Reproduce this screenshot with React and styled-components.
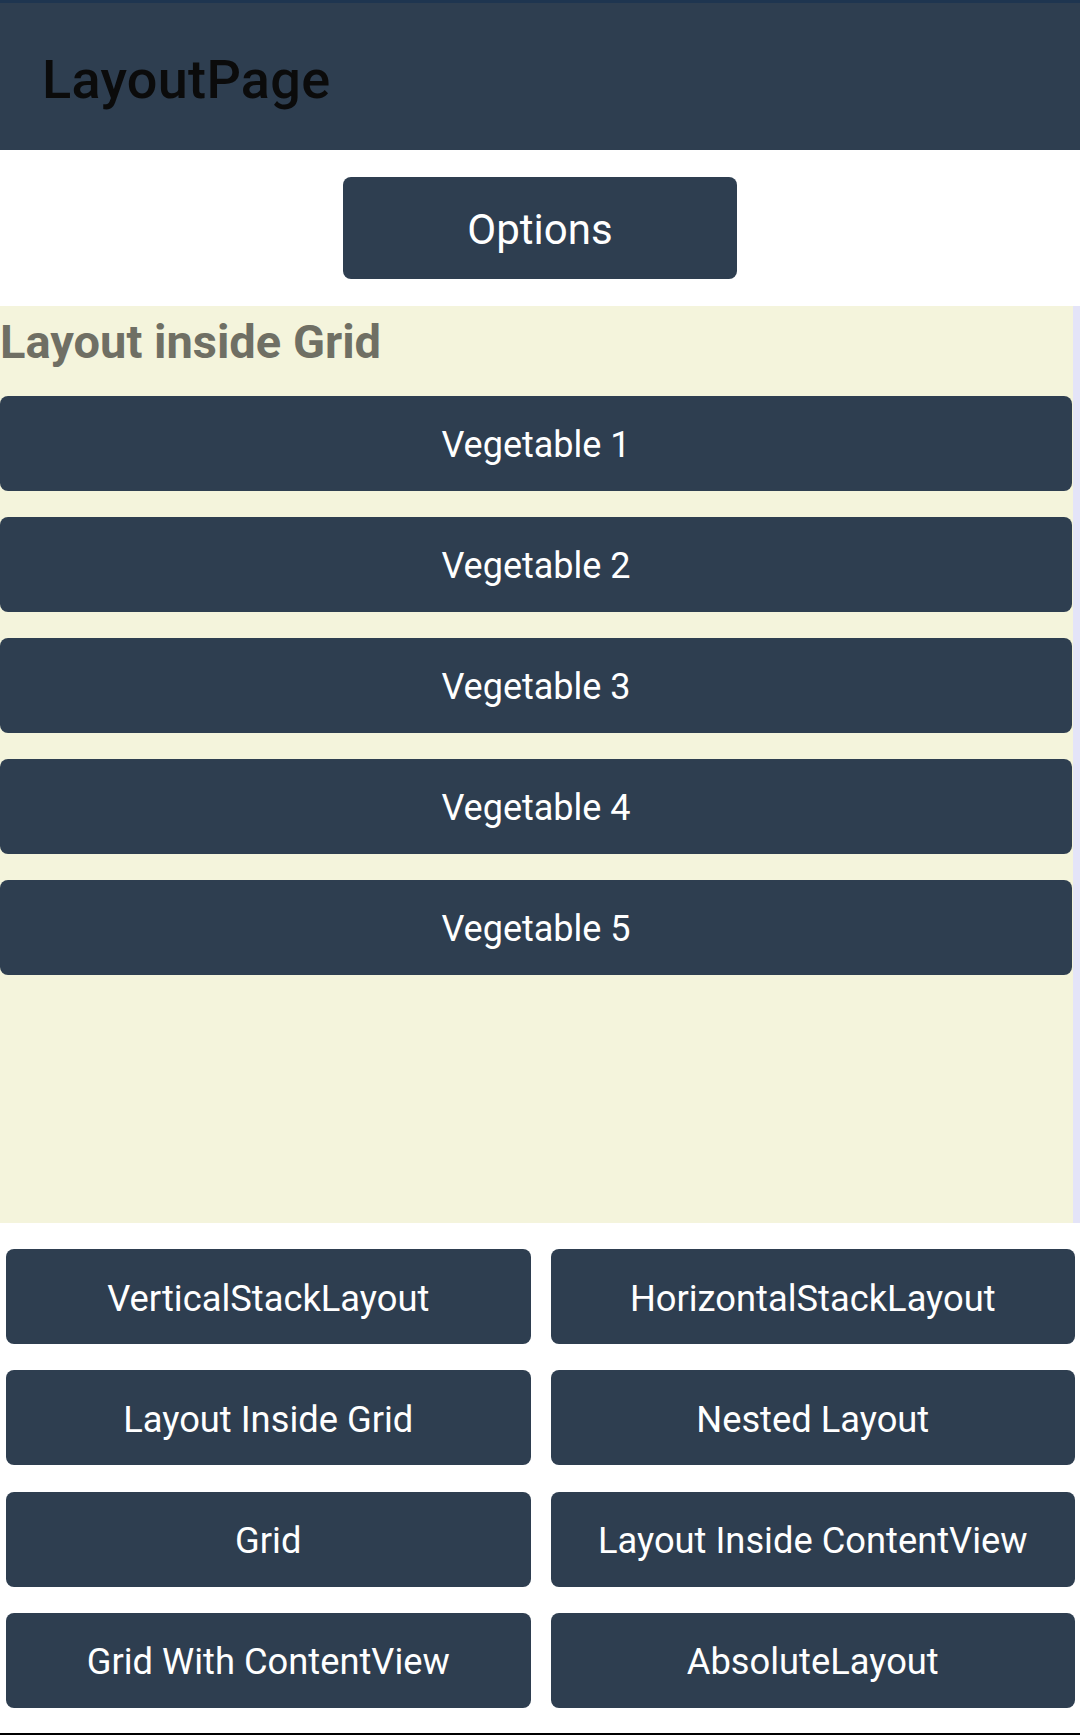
import React from "react";
import styled, { createGlobalStyle } from "styled-components";

const GlobalStyle = createGlobalStyle`
  html, body {
    margin: 0;
    padding: 0;
    background: #ffffff;
    font-family: Roboto, "Noto Sans", "Liberation Sans", sans-serif;
  }
  * { box-sizing: border-box; }
`;

const NAVY = "#2e3e50";

const Page = styled.div`
  display: flex;
  flex-direction: column;
  width: 1080px;
  min-height: 1735px;
  border-bottom: 2px solid #000000;
`;

const StatusStrip = styled.div`
  height: 3px;
  background: #1e3550;
`;

const Header = styled.header`
  height: 147px;
  background: ${NAVY};
  display: flex;
  align-items: center;
  padding-left: 42px;
`;

const Title = styled.h1`
  margin: 0;
  padding-top: 6px;
  font-size: 54px;
  font-weight: 500;
  letter-spacing: 0.3px;
  color: #0b0b0b;
`;

const OptionsRow = styled.div`
  display: flex;
  justify-content: center;
  padding: 27px 0;
`;

const Button = styled.button`
  border: none;
  margin: 0;
  padding: 3px 0 0;
  background: ${NAVY};
  color: #ffffff;
  font-family: inherit;
  font-weight: 400;
  font-size: ${(p) => p.$size || 36}px;
  height: ${(p) => p.$height || 95}px;
  width: ${(p) => (p.$width ? `${p.$width}px` : "100%")};
  border-radius: 8px;
  display: flex;
  align-items: center;
  justify-content: center;
  cursor: pointer;
`;

const Section = styled.section`
  display: grid;
  grid-template-columns: 1073px 7px;
  height: 917px;
`;

const SectionMain = styled.div`
  background: #f4f4dc;
  display: flex;
  flex-direction: column;
`;

const SectionSide = styled.div`
  background: #e4e4f8;
`;

const SectionTitle = styled.h2`
  margin: 0;
  padding: 8px 0 0 0;
  height: 90px;
  font-size: 47px;
  font-weight: 700;
  color: #6f6f64;
`;

const VegList = styled.div`
  display: flex;
  flex-direction: column;
  gap: 26px;
  padding-right: 1px;
`;

const NavGrid = styled.div`
  display: grid;
  grid-template-columns: 1fr 1fr;
  column-gap: 20px;
  row-gap: 26.3px;
  padding: 26px 5px 0 6px;
`;

const vegetables = ["Vegetable 1", "Vegetable 2", "Vegetable 3", "Vegetable 4", "Vegetable 5"];

const navItems = [
  "VerticalStackLayout",
  "HorizontalStackLayout",
  "Layout Inside Grid",
  "Nested Layout",
  "Grid",
  "Layout Inside ContentView",
  "Grid With ContentView",
  "AbsoluteLayout",
];

export default function App() {
  return (
    <>
      <GlobalStyle />
      <Page>
        <StatusStrip />
        <Header>
          <Title>LayoutPage</Title>
        </Header>
        <OptionsRow>
          <Button $width={394} $height={102} $size={42}>
            Options
          </Button>
        </OptionsRow>
        <Section>
          <SectionMain>
            <SectionTitle>Layout inside Grid</SectionTitle>
            <VegList>
              {vegetables.map((v) => (
                <Button key={v}>{v}</Button>
              ))}
            </VegList>
          </SectionMain>
          <SectionSide />
        </Section>
        <NavGrid>
          {navItems.map((n) => (
            <Button key={n} $size={36.3}>{n}</Button>
          ))}
        </NavGrid>
      </Page>
    </>
  );
}
